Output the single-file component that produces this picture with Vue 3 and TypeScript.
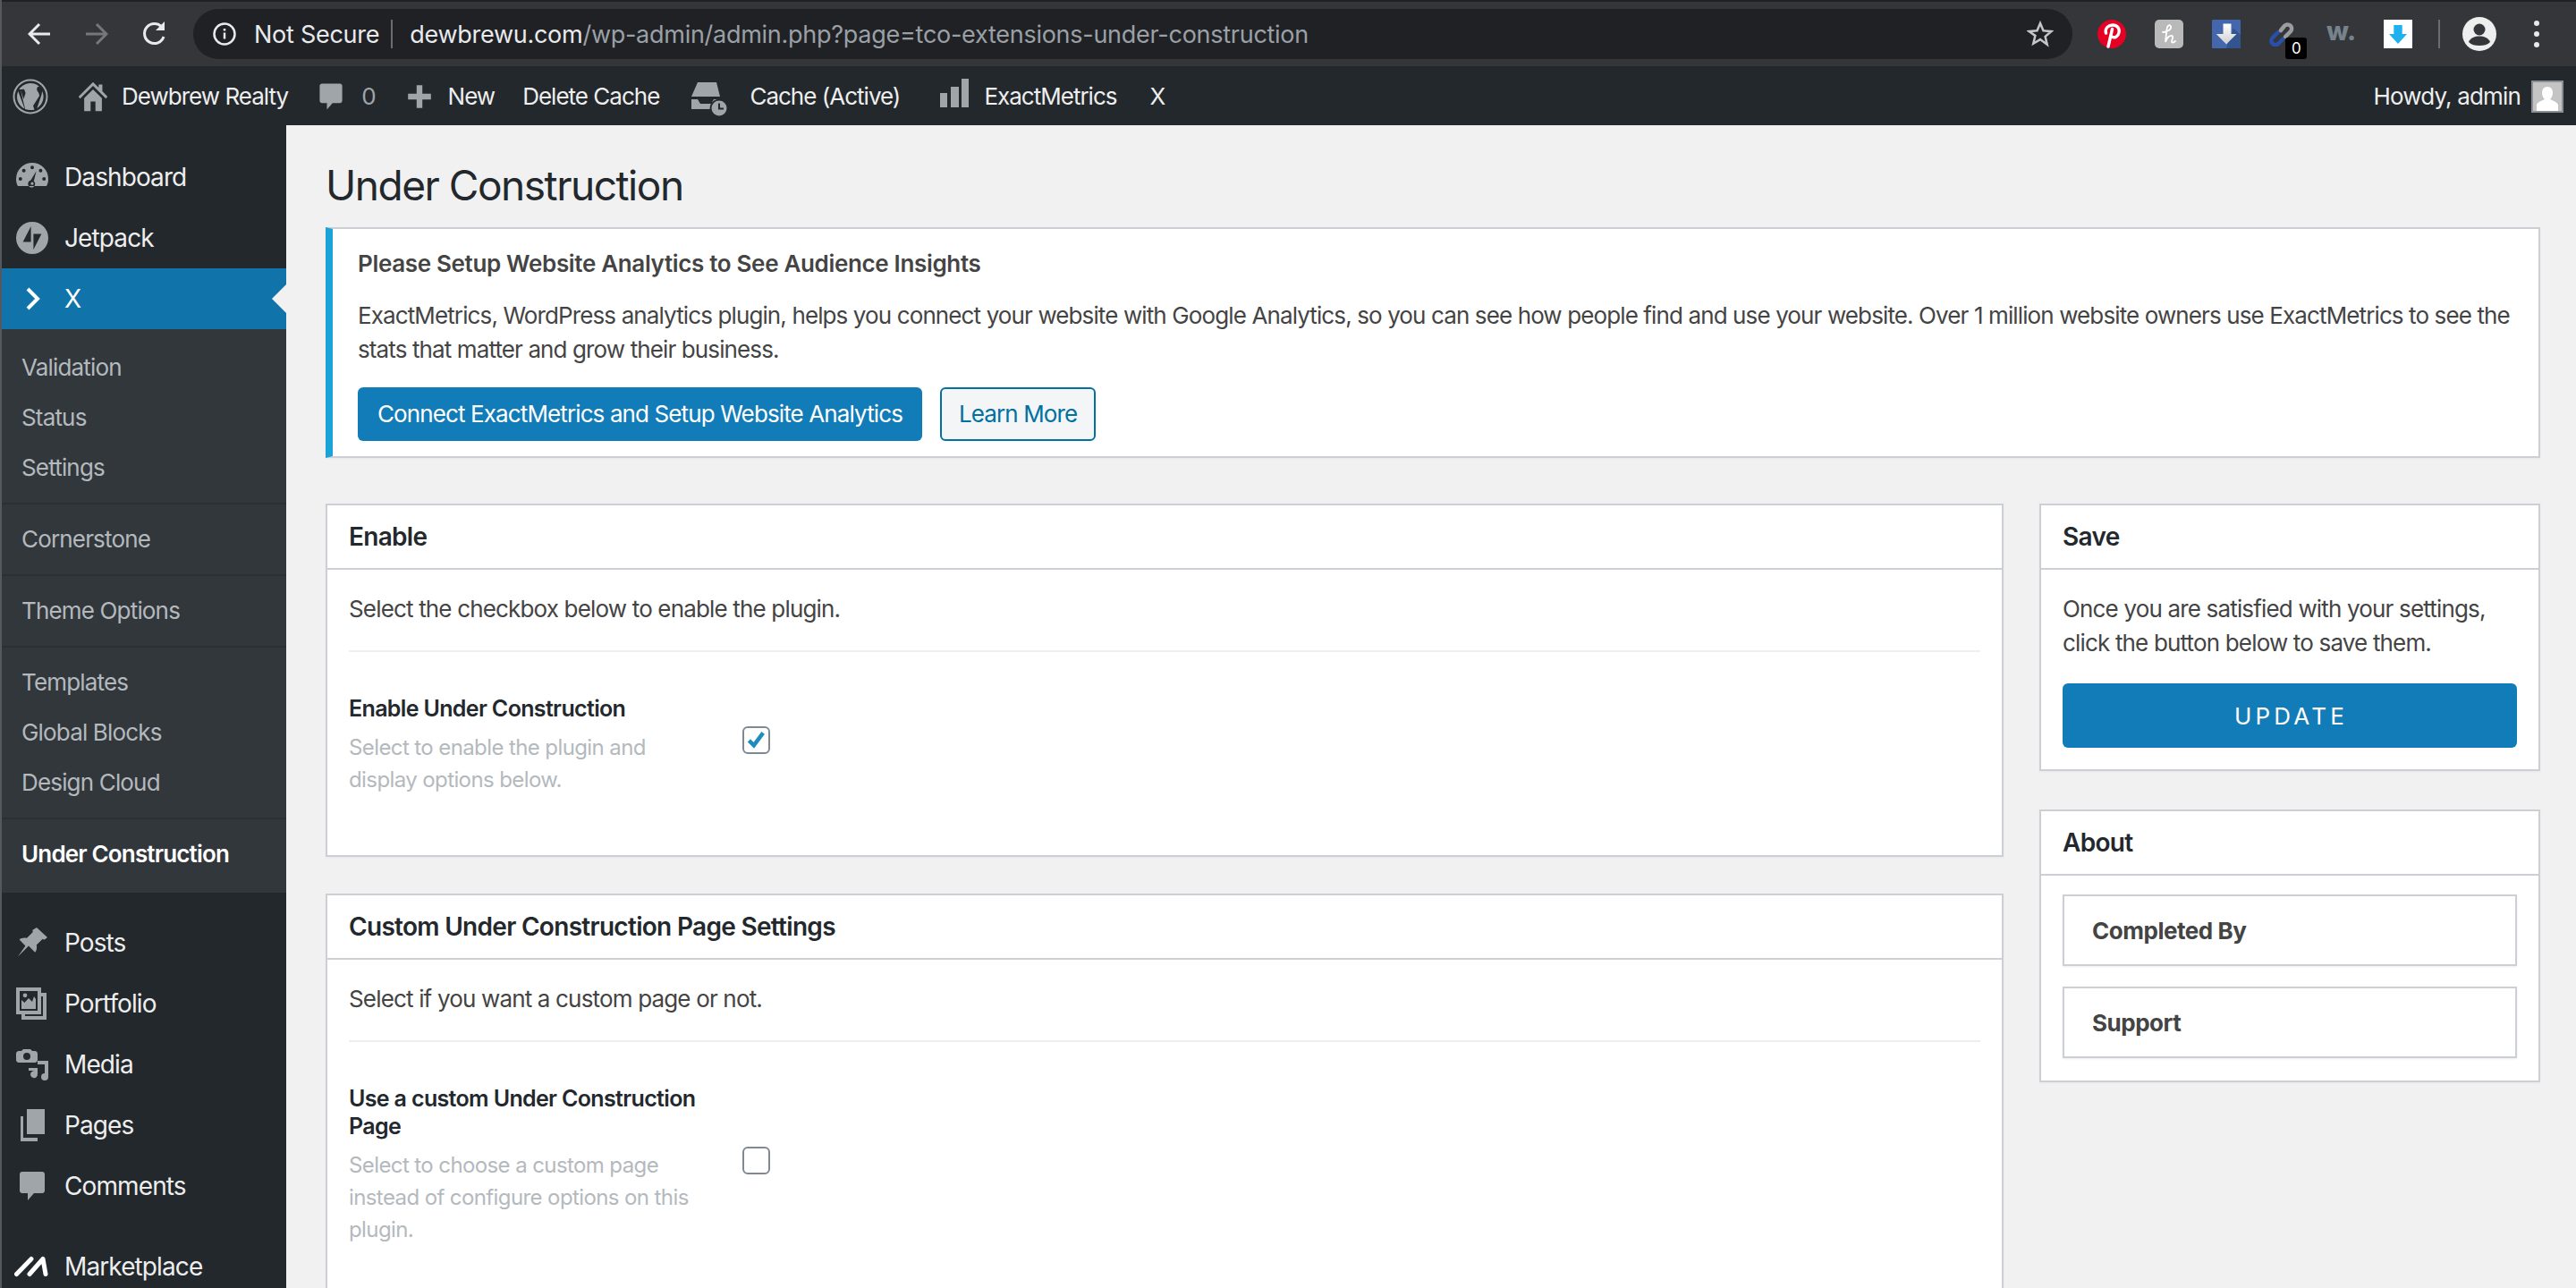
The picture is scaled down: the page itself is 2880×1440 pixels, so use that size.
<script setup lang="ts">
// WordPress admin "Under Construction" page inside a dark Chrome window.
const icons: Record<string, string> = {
  dashboard:
    'M10 2a9 9 0 0 0-9 9c0 1.5.3 2.9 1 4h16c.7-1.1 1-2.5 1-4a9 9 0 0 0-9-9zM10 3.6a1 1 0 1 1 0 2 1 1 0 0 1 0-2zM5.3 5.4a1 1 0 1 1 0 2 1 1 0 0 1 0-2zM14.7 5.4a1 1 0 1 1 0 2 1 1 0 0 1 0-2zM3.4 10a1 1 0 1 1 0 2 1 1 0 0 1 0-2zM16.6 10a1 1 0 1 1 0 2 1 1 0 0 1 0-2zM12.3 6.6l-1.4 5.6a2 2 0 1 1-1.7-.4zM10 12.8a.8.8 0 1 0 0 1.6.8.8 0 0 0 0-1.6z',
  jetpack:
    'M10 1a9 9 0 1 0 0 18 9 9 0 0 0 0-18zM9.3 3.5v8.7H4.8zM10.7 16.5V7.8h4.5z',
  pin: 'M12.5 1.5l6 5.5-1.6 1.2-1.2-.2-3.3 3.2c.4 1.6.1 3.1-.8 4.2l-3.6-3.6L2 17.8l4.2-6-3.4-3.6c1.1-.9 2.6-1.2 4.2-.8l3.3-3.3-.1-1.2z',
  portfolio:
    'M1 1h14v3h3v15H4v-3H1zM3 3v11h10V3zM6 16v1h10V6h-1v10zM4 13V8l1.7 1.5L8 7l2 2 1-3 1 1.5V13zM6 4.2a1.2 1.2 0 1 1 0 2.4 1.2 1.2 0 0 1 0-2.4z',
  media:
    'M5 1.5h4l1 1h1.500c.8 0 1.500.7 1.500 1.500v3.500c0 .8-.7 1.500-1.500 1.500H2.500C1.700 9 1 8.300 1 7.500V4c0-.8.7-1.500 1.500-1.500H4zM7 3.500a2 2 0 1 0 0 4 2 2 0 0 0 0-4zM13 8h6v9a2 2 0 1 1-2-2V10h-4zM8 12h5v3.500a2 2 0 1 1-2-1.900V13.500H8z',
  pages: 'M7 1h10v14H7zM3.500 5H5v12h8v2H3.500z',
  comment: 'M4.500 2h11C16.400 2 17 2.600 17 3.500v9c0 .9-.6 1.500-1.500 1.500H11l-3.500 4v-4h-3C3.600 14 3 13.400 3 12.500v-9C3 2.600 3.600 2 4.500 2z',
  home: 'M10 1l3.500 3.400V2.500h2.300v4.200L19 10l-1 1.200-8-7.900-8 7.900L1 10zM4.500 11L10 5.500l5.500 5.500v8h-4v-6h-3v6h-4z',
  plus: 'M8 2h4v6h6v4h-6v6H8v-6H2V8h6z',
}

const topMenu = [
  { label: 'Dashboard', icon: 'dashboard' },
  { label: 'Jetpack', icon: 'jetpack' },
]
const subGroups = [
  ['Validation', 'Status', 'Settings'],
  ['Cornerstone'],
  ['Theme Options'],
  ['Templates', 'Global Blocks', 'Design Cloud'],
]
const lowerMenu = [
  { label: 'Posts', icon: 'pin' },
  { label: 'Portfolio', icon: 'portfolio' },
  { label: 'Media', icon: 'media' },
  { label: 'Pages', icon: 'pages' },
  { label: 'Comments', icon: 'comment' },
]
</script>

<template>
  <div class="window">
    <header class="toolbar">
      <svg class="nav" viewBox="0 0 26 26"><path d="M25 13H3M13 2L2 13l11 11" /></svg>
      <svg class="nav dim" viewBox="0 0 26 26"><path d="M1 13h22M13 2l11 11-11 11" /></svg>
      <svg class="nav reload" viewBox="0 0 30 30"><path d="M25 18a11 11 0 1 1-2-10.500" /><path class="solid" d="M26 1v10H16z" /></svg>
      <div class="omnibox">
        <svg class="info" viewBox="0 0 26 26"><circle cx="13" cy="13" r="11.500" /><path d="M13 11.500v7M13 7v2.500" /></svg>
        <span class="secure">Not Secure</span>
        <i class="omni-div" />
        <span class="url"><b>dewbrewu.com</b>/wp-admin/admin.php?page=tco-extensions-under-construction</span>
        <svg class="star" viewBox="0 0 30 30"><path d="M15 3l3.500 8.300 9 .7-6.900 5.900 2.100 8.800L15 21.100l-7.700 4.600 2.100-8.800L2.500 12l9-.7z" /></svg>
      </div>
      <div class="exts">
        <svg class="ext" viewBox="0 0 32 32">
          <circle cx="16" cy="16" r="16" fill="#e60023" />
          <path d="M9.500 15C8 9.500 12.500 6 17 6c5 0 8 3.500 7 8.500-.8 4.500-5 6.500-8 4.500M16.500 10.500L12 30" fill="none" stroke="#fff" stroke-width="3.400" stroke-linecap="round" />
        </svg>
        <svg class="ext" viewBox="0 0 32 32">
          <rect width="32" height="32" rx="5" fill="#b9b9b9" />
          <path d="M9 14c5 0 10-3 9-6.500-.8-2.500-4-1.500-4.500 3L12 25c1.500-5 5-8 7.500-7 2 .8-.5 4.500-.5 6.500 0 1.500 2 1.500 4-.5" fill="none" stroke="#fff" stroke-width="1.800" stroke-linecap="round" />
        </svg>
        <svg class="ext" viewBox="0 0 32 32">
          <defs>
            <linearGradient id="dl-arrow" x1="0" y1="0" x2="0" y2="1"><stop offset="0" stop-color="#fff" /><stop offset="1" stop-color="#cfcfcf" /></linearGradient>
          </defs>
          <rect width="32" height="32" rx="1" fill="#4366ad" />
          <path d="M24 9.500L32 17v15H16z" fill="#33548f" />
          <path d="M12.500 4.500h9V16h6L16 27.500 4.800 16h7.700z" fill="url(#dl-arrow)" />
        </svg>
        <span class="ext linkbox">
          <svg viewBox="0 0 28 28">
            <path d="M10 12L4 18a4.500 4.500 0 0 0 6 7l5-5" class="link-blue" />
            <path d="M13 10l4-5a4.500 4.500 0 0 1 7 6l-6 6" class="link-grey" />
          </svg>
          <em class="badge">0</em>
        </span>
        <span class="ext wmark">w.</span>
        <svg class="ext" viewBox="0 0 32 32"><rect width="32" height="32" fill="#fff" /><path d="M11.300 6h9.400v10H26L16 27 6 16h5.300z" fill="#1eb0ef" /></svg>
      </div>
      <i class="tool-div" />
      <svg class="profile" viewBox="0 0 38 38"><circle cx="19" cy="19" r="19" fill="#eee" /><circle cx="19" cy="14" r="6.500" fill="#35363a" /><path d="M7 28c2-5 7-6.500 12-6.500S29 23 31 28c-3 3-7 4-12 4s-9-1-12-4z" fill="#35363a" /></svg>
      <div class="dots"><i /><i /><i /></div>
    </header>

    <nav class="adminbar">
      <svg class="wp" viewBox="0 0 40 40">
        <circle cx="20" cy="20" r="18.500" fill="none" stroke="#a0a5aa" stroke-width="2" />
        <path fill="#a0a5aa" d="M5 20c0 6 3.500 11 8.500 13.500L6.300 14A15 15 0 0 0 5 20zM30 19.300c0-2-.7-3.300-1.300-4.300-.8-1.300-1.500-2.400-1.500-3.600 0-1.400 1-2.700 2.500-2.700h.2A15 15 0 0 0 7.300 12h1l4.700-.2 1.600 4.300-2.200 6.600L8.800 11.700l5.300 22.300c1.800.7 3.900 1 5.900 1zM20.200 21.200l-4.500 13 3.400.8h3l2.400-.3zM33 13.500c.2 2-.3 4-1.100 6.200L27.300 33A15 15 0 0 0 33 13.500z" />
      </svg>
      <svg class="bar-icon home" viewBox="0 0 20 20"><path :d="icons.home" /></svg>
      <span class="bar-text site">Dewbrew Realty</span>
      <svg class="bar-icon cmt" viewBox="0 0 20 20"><path :d="icons.comment" /></svg>
      <span class="bar-text zero">0</span>
      <svg class="bar-icon plus" viewBox="0 0 20 20"><path :d="icons.plus" /></svg>
      <span class="bar-text new">New</span>
      <span class="bar-text del">Delete Cache</span>
      <svg class="bar-icon cache" viewBox="0 0 40 48">
        <path d="M7 8h21l4 16H0z" />
        <path d="M0 27h7l3 5h12l3-5h3.500A10.500 10.500 0 0 0 20.500 38H0z" />
        <circle cx="31" cy="37" r="8.500" />
        <path d="M30 31.500h2v5h4v2h-6z" fill="#23282d" />
      </svg>
      <span class="bar-text active-cache">Cache (Active)</span>
      <svg class="bar-icon bars" viewBox="0 0 32 32"><path d="M0 16h8v16H0zM12 9h9v23h-9zM24 0h8v32h-8z" /></svg>
      <span class="bar-text em">ExactMetrics</span>
      <span class="bar-text x">X</span>
      <span class="bar-text howdy">Howdy, admin</span>
      <span class="avatar">
        <svg viewBox="0 0 32 32"><rect width="32" height="32" fill="#c4c4c4" /><path fill="#fff" d="M16 5c4 0 6 3 6 7 0 3-1.500 5.500-3 7 3 1.500 8 3 9 6v7H4v-7c1-3 6-4.500 9-6-1.500-1.500-3-4-3-7 0-4 2-7 6-7z" /></svg>
      </span>
    </nav>

    <div class="body">
      <aside class="sidebar">
        <a v-for="m in topMenu" :key="m.label" class="menu-row">
          <svg class="menu-icon" viewBox="0 0 20 20"><path fill-rule="evenodd" :d="icons[m.icon]" /></svg>
          {{ m.label }}
        </a>
        <a class="menu-row current">
          <svg class="menu-icon chevron" viewBox="0 0 40 40"><path d="M15 9l11 11-11 11" /></svg>
          X
        </a>
        <div class="submenu">
          <div v-for="(group, i) in subGroups" :key="i" class="subgroup">
            <a v-for="s in group" :key="s" class="sub-row">{{ s }}</a>
          </div>
          <div class="subgroup last">
            <a class="sub-row on">Under Construction</a>
          </div>
        </div>
        <div class="lower">
          <a v-for="m in lowerMenu" :key="m.label" class="menu-row">
            <svg class="menu-icon" viewBox="0 0 20 20"><path fill-rule="evenodd" :d="icons[m.icon]" /></svg>
            {{ m.label }}
          </a>
        </div>
        <a class="menu-row market">
          <svg class="menu-icon slashes" viewBox="0 0 40 40"><path d="M2.500 28.500L19 11.500M17 28.500L32 11.500M32 11.500L35 28.500" /></svg>
          Marketplace
        </a>
      </aside>

      <main class="content">
        <h1>Under Construction</h1>

        <section class="notice">
          <h3>Please Setup Website Analytics to See Audience Insights</h3>
          <p>ExactMetrics, WordPress analytics plugin, helps you connect your website with Google Analytics, so you can see how people find and use your website. Over 1 million website owners use ExactMetrics to see the stats that matter and grow their business.</p>
          <div class="notice-actions">
            <a class="btn primary">Connect ExactMetrics and Setup Website Analytics</a>
            <a class="btn ghost">Learn More</a>
          </div>
        </section>

        <div class="columns">
          <div class="col-main">
            <section class="card">
              <h2 class="card-head">Enable</h2>
              <div class="card-body">
                <p class="intro">Select the checkbox below to enable the plugin.</p>
                <div class="field">
                  <div class="field-label">
                    <strong>Enable Under Construction</strong>
                    <span>Select to enable the plugin and display options below.</span>
                  </div>
                  <span class="check">
                    <svg viewBox="0 0 30 30"><path d="M6 15.500l6 6L23.500 6" /></svg>
                  </span>
                </div>
              </div>
            </section>

            <section class="card">
              <h2 class="card-head">Custom Under Construction Page Settings</h2>
              <div class="card-body">
                <p class="intro">Select if you want a custom page or not.</p>
                <div class="field">
                  <div class="field-label">
                    <strong>Use a custom Under Construction Page</strong>
                    <span>Select to choose a custom page instead of configure options on this plugin.</span>
                  </div>
                  <span class="check" />
                </div>
              </div>
            </section>
          </div>

          <div class="col-side">
            <section class="card">
              <h2 class="card-head side">Save</h2>
              <div class="save-body">
                <p>Once you are satisfied with your settings, click the button below to save them.</p>
                <a class="update">UPDATE</a>
              </div>
            </section>
            <section class="card">
              <h2 class="card-head side">About</h2>
              <div class="about-body">
                <div class="about-box">Completed By</div>
                <div class="about-box">Support</div>
              </div>
            </section>
          </div>
        </div>
      </main>
    </div>
  </div>
</template>

<style>
html, body { margin: 0; background: #f1f1f1; overflow: hidden; }
</style>

<style scoped>
.window {
  width: 2880px;
  height: 1440px;
  box-sizing: border-box;
  border-left: 2px solid #55585c;
  overflow: hidden;
  display: flex;
  flex-direction: column;
  font-family: Inter, "Noto Sans", sans-serif;
  color: #23282d;
}
/* the reference font sets tighter than Inter */
.window * { letter-spacing: -0.032em; }

/* browser toolbar */
.toolbar {
  height: 72px;
  flex: none;
  border-top: 2px solid #202124;
  background: #35363a;
  display: flex;
  align-items: center;
  box-sizing: content-box;
}
.nav {
  width: 26px;
  height: 26px;
  margin-left: 29px;
  margin-right: 11px;
  fill: none;
  stroke: #e8eaed;
  stroke-width: 3;
}
.nav.dim { margin-left: 27px; margin-right: 0; stroke: #75777a; }
.nav.reload { width: 30px; height: 30px; margin-left: 37px; margin-right: 28px; }
.nav .solid { fill: #e8eaed; stroke: none; }
.omnibox {
  width: 2101px;
  height: 56px;
  border-radius: 28px;
  background: #202124;
  display: flex;
  align-items: center;
  font-size: 27px;
  color: #e8eaed;
}
.info {
  width: 26px;
  height: 26px;
  margin-left: 22px;
  fill: none;
  stroke: #e8eaed;
  stroke-width: 2.500;
}
.secure { margin-left: 20px; letter-spacing: -0.01em; }
.omni-div { width: 2px; height: 32px; margin: 0 19px 0 13px; background: #6a6c70; }
.url { color: #9aa0a6; white-space: nowrap; flex: 1; letter-spacing: -0.01em; }
.url b { color: #e8eaed; font-weight: 400; letter-spacing: -0.01em; }
.star {
  width: 30px;
  height: 30px;
  margin-right: 21px;
  fill: none;
  stroke: #c4c6c9;
  stroke-width: 2.500;
}
.exts { display: flex; align-items: center; gap: 32px; margin-left: 28px; }
.ext { width: 32px; height: 32px; display: block; flex: none; }
.linkbox { position: relative; }
.linkbox svg { width: 28px; height: 28px; display: block; fill: none; stroke-width: 4.500; stroke-linecap: round; margin-top: 2px; }
.link-blue { stroke: #2a4fa8; }
.link-grey { stroke: #9a9c9f; }
.badge {
  position: absolute;
  left: 18px;
  top: 20px;
  width: 24px;
  height: 24px;
  border-radius: 3px;
  background: #000;
  color: #fff;
  text-align: center;
  font: 400 17px/24px Inter, sans-serif;
}
.wmark {
  color: #76838c;
  font: 800 29px/26px Inter, sans-serif;
  letter-spacing: 0;
  text-align: center;
  height: 26px;
  margin-bottom: 6px;
}
.tool-div { width: 2px; height: 32px; margin-left: 29px; background: #6a6c70; }
.profile { width: 38px; height: 38px; margin-left: 25px; }
.dots { display: flex; flex-direction: column; gap: 6px; margin-left: 42px; }
.dots i { width: 6px; height: 6px; border-radius: 50%; background: #e8eaed; }

/* wp admin bar */
.adminbar {
  height: 66px;
  flex: none;
  box-sizing: border-box;
  padding-top: 2px;
  background: #23282d;
  display: flex;
  align-items: center;
  font-size: 26px;
  color: #eee;
  white-space: nowrap;
}
.wp { width: 40px; height: 40px; margin-left: 12px; }
.bar-icon { fill: #a0a5aa; flex: none; }
.bar-text { line-height: 1; letter-spacing: -0.038em; }
.home { width: 36px; height: 36px; margin-left: 32px; }
.site { margin-left: 14px; }
.cmt { width: 36px; height: 36px; margin-left: 30px; }
.zero { margin-left: 16px; color: #a0a5aa; }
.plus { width: 32px; height: 32px; margin-left: 33px; }
.new { margin-left: 16px; }
.del { margin-left: 31px; }
.cache { width: 40px; height: 48px; margin-left: 36px; }
.active-cache { margin-left: 25px; }
.bars { width: 32px; height: 32px; margin: 0 0 8px 45px; }
.em { margin-left: 17px; }
.x { margin-left: 37px; }
.howdy { margin-left: auto; letter-spacing: -0.032em; }
.avatar {
  width: 36px;
  height: 36px;
  box-sizing: border-box;
  border: 2px solid #8b8f94;
  margin: 0 14px 0 12px;
  display: block;
}
.avatar svg { width: 32px; height: 32px; display: block; }

/* layout */
.body { flex: 1; min-height: 0; display: flex; background: #f1f1f1; }

/* sidebar */
.sidebar {
  width: 318px;
  flex: none;
  box-sizing: border-box;
  padding-top: 24px;
  background: #23282d;
}
.menu-row {
  height: 68px;
  padding-left: 14px;
  display: flex;
  align-items: center;
  gap: 16px;
  font-size: 28px;
  color: #eee;
  position: relative;
}
.menu-icon { width: 40px; height: 40px; flex: none; fill: #a0a5aa; }
.current { background: #1074aa; color: #fff; }
.current::after {
  content: "";
  position: absolute;
  right: 0;
  top: 18px;
  border: 16px solid transparent;
  border-right-color: #f1f1f1;
  border-left-width: 0;
}
.chevron { fill: none; stroke: #fff; stroke-width: 4; }
.submenu { background: #32373c; padding: 14px 0 0; }
.subgroup { padding: 10px 0 12px; border-bottom: 2px solid #2b3035; }
.subgroup:first-child { padding-top: 0; }
.subgroup.last { border-bottom: none; padding-bottom: 16px; }
.sub-row {
  height: 56px;
  padding-left: 22px;
  display: flex;
  align-items: center;
  font-size: 26px;
  color: #b4b9be;
}
.sub-row.on { color: #fff; font-weight: 600; }
.lower { margin-top: 22px; }
.market { margin-top: 22px; color: #eee; }
.slashes { fill: none; stroke: #fff; stroke-width: 5; stroke-linecap: round; stroke-linejoin: round; }

/* content */
.content { flex: 1; min-width: 0; padding: 37px 40px 0 44px; }
h1 { margin: 0 0 17px; font-size: 46px; line-height: 60px; font-weight: 400; letter-spacing: -0.028em; }
.notice {
  background: #fff;
  border: 2px solid #ccd0d4;
  border-left: 8px solid #1aa3d6;
  padding: 20px 10px 17px 28px;
  color: #444;
  font-size: 26px;
  line-height: 38px;
  box-shadow: 0 1px 2px rgba(0, 0, 0, .04);
}
.notice h3 { margin: 0; font-size: 26px; font-weight: 600; line-height: 38px; letter-spacing: -0.013em; }
.notice p { margin: 20px 0 23px; letter-spacing: -0.034em; }
.notice-actions { display: flex; gap: 20px; }
.btn {
  height: 60px;
  box-sizing: border-box;
  border-radius: 6px;
  display: flex;
  align-items: center;
  font-size: 26px;
  letter-spacing: -0.034em;
}
.primary { padding: 0 22px; background: #127cb8; color: #fff; }
.ghost { padding: 0 19px; border: 2px solid #0071a1; background: #f3f5f6; color: #0071a1; }

.columns { display: flex; gap: 40px; margin-top: 51px; }
.col-main { width: 1876px; display: flex; flex-direction: column; gap: 41px; }
.col-side { width: 560px; display: flex; flex-direction: column; gap: 43px; }

.card { background: #fff; border: 2px solid #ccd0d4; box-shadow: 0 1px 2px rgba(0, 0, 0, .04); }
.card-head {
  height: 70px;
  margin: 0;
  padding-left: 24px;
  border-bottom: 2px solid #ccd0d4;
  display: flex;
  align-items: center;
  font-size: 28px;
  font-weight: 600;
  letter-spacing: -0.025em;
}
.card-body { padding: 25px 24px 66px; }
.intro {
  margin: 0;
  padding-bottom: 27px;
  border-bottom: 2px solid #eee;
  font-size: 26px;
  line-height: 38px;
  color: #444;
}
.field { display: flex; align-items: center; padding-top: 48px; }
.field-label { width: 400px; margin-right: 40px; flex: none; }
.field-label strong { display: block; font-size: 25px; line-height: 31px; font-weight: 600; letter-spacing: -0.026em; }
.field-label span { display: block; margin-top: 10px; font-size: 24px; line-height: 36px; color: #b4b9be; letter-spacing: -0.025em; }
.check {
  width: 31px;
  height: 31px;
  box-sizing: border-box;
  margin-bottom: 12px;
  border: 2px solid #7e8993;
  border-radius: 6px;
  background: #fff;
  display: block;
}
.check svg { width: 27px; height: 27px; display: block; fill: none; stroke: #1e8cbe; stroke-width: 5; }

.save-body { padding: 25px 24px 24px; }
.save-body p { margin: 0 0 26px; font-size: 26px; line-height: 38px; color: #444; }
.update {
  height: 72px;
  padding-left: 3px;
  border-radius: 6px;
  background: #127cb8;
  color: #fff;
  display: flex;
  align-items: center;
  justify-content: center;
  font-size: 26px;
  letter-spacing: 4.200px;
}
.about-body { padding: 21px 24px 25px; display: flex; flex-direction: column; gap: 23px; }
.about-box {
  height: 80px;
  box-sizing: border-box;
  border: 2px solid #ccd0d4;
  padding-left: 31px;
  display: flex;
  align-items: center;
  font-size: 26px;
  font-weight: 700;
  letter-spacing: -0.018em;
  color: #444;
  box-shadow: 0 1px 2px rgba(0, 0, 0, .08);
}
</style>
